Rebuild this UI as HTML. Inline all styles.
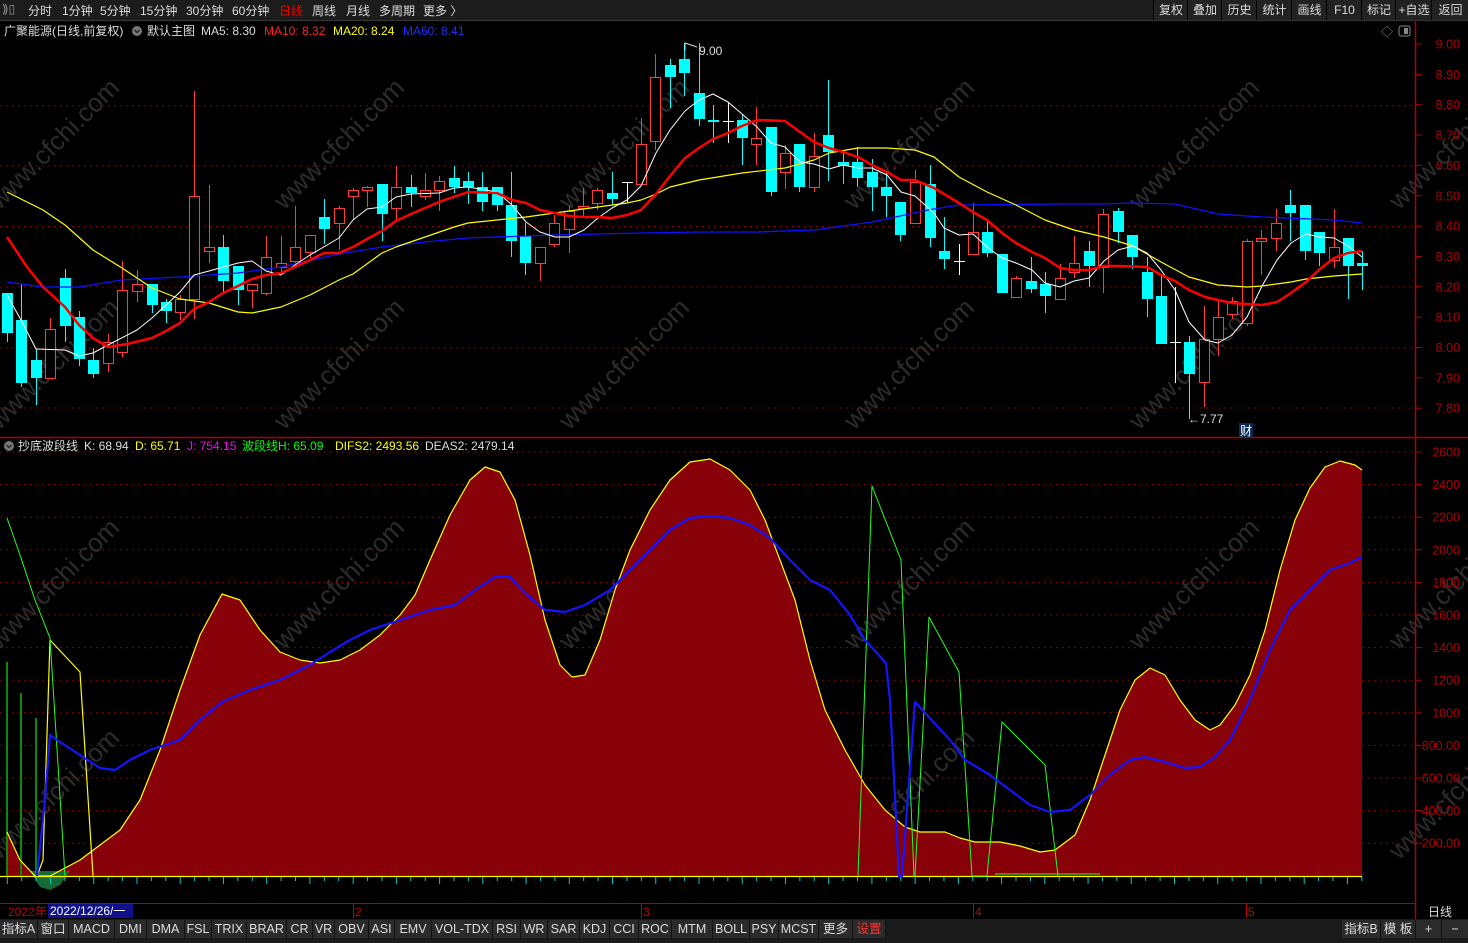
<!DOCTYPE html>
<html><head><meta charset="utf-8">
<style>
html,body{margin:0;padding:0;background:#000;width:1468px;height:943px;overflow:hidden;font-family:"Liberation Sans","Noto Sans CJK SC",sans-serif;}
#top{position:absolute;left:0;top:0;width:1468px;height:20px;background:#1c1c1c;border-bottom:1px solid #333;}
#top span{position:absolute;top:2px;font-size:12px;color:#ddd;white-space:nowrap}
.rb{position:absolute;top:0;height:20px;line-height:20px;font-size:12px;color:#ddd;text-align:center;border-left:1px solid #000;background:#222}
#bot{position:absolute;left:0;top:919px;width:1468px;height:24px;background:#1a1a1a;}
#bot div{position:absolute;top:1px;height:18px;line-height:18px;font-size:12.5px;color:#ddd;background:#2b2b2b;text-align:center;border-right:1px solid #111}
svg{position:absolute;left:0;top:0}
</style></head><body>
<svg id="s" width="1468" height="943" xmlns="http://www.w3.org/2000/svg"></svg>
<div id="top">
<span style="left:2px;color:#999">⟫▯</span>
<span style="left:28px">分时</span><span style="left:62px">1分钟</span><span style="left:100px">5分钟</span><span style="left:140px">15分钟</span><span style="left:186px">30分钟</span><span style="left:232px">60分钟</span><span style="left:279px;color:#e00">日线</span><span style="left:312px">周线</span><span style="left:346px">月线</span><span style="left:379px">多周期</span><span style="left:423px">更多 〉</span>
<div class="rb" style="left:1153px;width:34px">复权</div>
<div class="rb" style="left:1187px;width:34px">叠加</div>
<div class="rb" style="left:1221px;width:35px">历史</div>
<div class="rb" style="left:1256px;width:35px">统计</div>
<div class="rb" style="left:1291px;width:35px">画线</div>
<div class="rb" style="left:1326px;width:35px">F10</div>
<div class="rb" style="left:1361px;width:34px">标记</div>
<div class="rb" style="left:1395px;width:36px">+自选</div>
<div class="rb" style="left:1431px;width:37px">返回</div>
</div>
<div id="bot">
<div style="left:0;width:37px">指标A</div><div style="left:38px;width:30px">窗口</div><div style="left:69px;width:45px">MACD</div><div style="left:115px;width:31px">DMI</div><div style="left:147px;width:37px">DMA</div><div style="left:185px;width:26px">FSL</div><div style="left:212px;width:34px">TRIX</div><div style="left:247px;width:39px">BRAR</div><div style="left:287px;width:25px">CR</div><div style="left:313px;width:21px">VR</div><div style="left:335px;width:33px">OBV</div><div style="left:369px;width:25px">ASI</div><div style="left:395px;width:36px">EMV</div><div style="left:432px;width:60px">VOL-TDX</div><div style="left:493px;width:27px">RSI</div><div style="left:521px;width:26px">WR</div><div style="left:548px;width:31px">SAR</div><div style="left:580px;width:29px">KDJ</div><div style="left:610px;width:28px">CCI</div><div style="left:639px;width:32px">ROC</div><div style="left:672px;width:40px">MTM</div><div style="left:713px;width:36px">BOLL</div><div style="left:750px;width:28px">PSY</div><div style="left:779px;width:39px">MCST</div><div style="left:819px;width:33px">更多</div><div style="left:853px;width:32px;color:#f33">设置</div>
<div style="left:1342px;width:38px">指标B</div><div style="left:1381px;width:34px">模 板</div><div style="left:1416px;width:25px">+</div><div style="left:1442px;width:26px">−</div>
</div>
<script>
var s=document.getElementById('s'),h='';
function L(x1,y1,x2,y2,c,w,d){h+='<line x1="'+x1+'" y1="'+y1+'" x2="'+x2+'" y2="'+y2+'" stroke="'+c+'" stroke-width="'+(w||1)+'"'+(d?' stroke-dasharray="'+d+'"':'')+'/>';}
function T(x,y,t,c,sz,a){h+='<text x="'+x+'" y="'+y+'" fill="'+c+'" font-size="'+(sz||12)+'"'+(a?' text-anchor="'+a+'"':'')+' font-family="Liberation Sans,Noto Sans CJK SC,sans-serif">'+t+'</text>';}
function P(pts,c,w){h+='<polyline fill="none" stroke="'+c+'" stroke-width="'+w+'" stroke-linejoin="round" points="'+pts+'"/>';}
// watermarks
var wm=[[60,150],[345,150],[630,150],[915,150],[1200,150],[1460,150],[60,370],[345,370],[630,370],[915,370],[1200,370],[60,590],[345,590],[630,590],[915,590],[1200,590],[1460,590],[60,800],[345,800],[630,800],[915,800],[1200,800],[1460,800]];
wm.forEach(function(p){h+='<text x="'+p[0]+'" y="'+p[1]+'" fill="#2c2c2c" font-size="26" text-anchor="middle" transform="rotate(-45 '+p[0]+' '+p[1]+')" font-family="Liberation Sans,sans-serif">www.cfchi.com</text>';});
// grids main
[105.7,166,226.5,287,348,408].forEach(function(y){L(0,y,1415,y,'#8a0000',1,'2,4');});
for(var k=0;k<13;k++){var y=452+32.6*k;L(0,y,1415,y,'#8a0000',1,'2,4');}
// axis
L(1415.5,20,1415.5,919,'#b00000',1.5);
L(0,437.5,1468,437.5,'#b00000',1.5);
L(0,903.5,1415,903.5,'#b00000',1);
L(0,21,1468,21,'#300',1);
for(var i=0;i<13;i++){var p=(9-i*0.1).toFixed(2),y=44+i*30.35;L(1416,y,1422,y,'#b00000');T(1460,y+4.5,p,'#b00000',12.5,'end');}
for(var i=0;i<13;i++){var v=2600-200*i,y=452+32.6*i;L(1416,y,1422,y,'#b00000');T(1460,y+4.5,v==2600||v==2400||v==2200||v==2000||v==1800||v==1600||v==1400||v==1200||v==1000?v:(v+'.00').replace('.00.00','.00'),'#b00000',12.5,'end');}
// candles [x,open/top,close/bot,high,low,type]
var C=[[7,293,333,293,342,'c'],[21,320,383,284,387,'c'],[36,360,378,349,405,'c'],[50,329,378,318,378,'r'],[65,278,326,269,342,'c'],[79,317,359,311,366,'c'],[93,360,374,348,378,'c'],[108,342,363,334,372,'r'],[122,290,352,261,357,'r'],[137,284,291,270,302,'r'],[152,284,305,284,313,'c'],[166,302,311,299,323,'c'],[180,299,312,295,320,'r'],[194,196,299,91,319,'r'],[209,247,251,185,263,'r'],[223,247,281,235,292,'c'],[238,266,290,266,305,'c'],[252,284,290,284,308,'r'],[266,257,293,236,295,'r'],[281,263,267,236,273,'r'],[295,247,261,206,264,'r'],[310,235,252,235,258,'r'],[324,217,229,199,244,'c'],[339,208,223,206,250,'r'],[353,190,196,188,220,'r'],[367,187,190,186,207,'r'],[382,184,214,184,241,'c'],[396,187,208,166,222,'r'],[411,187,193,175,207,'c'],[425,190,196,173,200,'r'],[439,181,190,176,211,'r'],[454,178,187,166,193,'c'],[468,181,187,172,204,'c'],[482,187,202,172,211,'c'],[497,187,205,187,211,'c'],[511,205,241,172,257,'c'],[525,236,263,223,275,'c'],[540,247,263,247,281,'r'],[554,223,244,215,247,'r'],[569,211,229,206,253,'r'],[583,206,208,188,217,'r'],[597,190,203,188,210,'r'],[612,193,199,172,205,'c'],[627,182,182,182,202,'w'],[641,144,184,118,184,'r'],[655,77,141,54,150,'r'],[670,65,77,59,108,'c'],[684,59,73,43,96,'c'],[699,93,119,43,126,'c'],[713,120,122,105,143,'c'],[728,121,121,102,143,'w'],[742,120,138,114,165,'c'],[756,138,144,107,165,'r'],[771,127,192,127,196,'c'],[785,153,172,145,189,'r'],[799,144,187,144,192,'c'],[814,156,187,133,192,'r'],[828,135,152,80,181,'c'],[843,162,166,150,184,'c'],[857,162,178,147,187,'c'],[872,172,187,159,211,'c'],[886,187,196,173,217,'c'],[900,202,235,202,241,'c'],[915,182,223,170,223,'r'],[930,184,238,165,247,'c'],[944,251,259,217,269,'c'],[959,261,261,244,275,'w'],[973,232,254,203,254,'r'],[987,232,253,220,257,'c'],[1002,254,293,254,293,'c'],[1016,278,297,276,297,'r'],[1031,281,289,257,293,'c'],[1045,284,296,272,313,'c'],[1060,278,299,264,299,'r'],[1074,263,272,236,278,'r'],[1089,251,266,241,287,'c'],[1103,214,267,209,293,'r'],[1118,211,232,208,243,'c'],[1132,235,257,235,269,'c'],[1147,272,299,257,317,'c'],[1161,296,344,275,344,'c'],[1175,342,342,287,383,'w'],[1189,342,374,336,419,'c'],[1204,339,382,306,407,'r'],[1218,317,339,300,356,'r'],[1232,301,314,297,319,'r'],[1247,241,323,239,326,'r'],[1261,238,241,230,275,'r'],[1276,223,238,209,251,'r'],[1290,205,213,190,241,'c'],[1305,205,251,205,260,'c'],[1319,232,253,232,266,'c'],[1334,247,260,209,268,'r'],[1348,238,266,238,299,'c'],[1362,263,266,251,290,'c']];
C.forEach(function(c){var x=c[0],col=c[5]=='c'?'#00ffff':c[5]=='r'?'#ff3b3b':'#ffffff';
L(x+.5,c[3],x+.5,c[4],col,1);
if(c[5]=='c'){h+='<rect x="'+(x-5)+'" y="'+c[1]+'" width="11" height="'+Math.max(2,c[2]-c[1])+'" fill="#00ffff"/>';}
else if(c[5]=='r'){h+='<rect x="'+(x-4.5)+'" y="'+(c[1]+.5)+'" width="10" height="'+Math.max(2,c[2]-c[1])+'" fill="#000" stroke="#ff3b3b" stroke-width="1"/>';}
else{L(x-5,c[1]+.5,x+6,c[1]+.5,'#fff',1);}
});
// MAs
P('7,282 43,287 79,287 122,280 180,277 238,273 281,267 339,254 382,247 425,242 468,238 555,235 641,233 699,232 757,232 814,230 872,222 928,210 959,205 1060,204 1104,204 1133,203 1175,204 1218,214 1262,217 1334,220 1362,223','#1010ff',1.3);
P('7,192 43,210 65,225 93,250 122,268 152,288 180,299 209,303 238,312 252,313 281,307 310,295 339,280 353,274 382,253 396,247 425,237 454,227 468,223 526,217 569,211 627,203 641,200 656,194 670,187 699,180 742,173 785,168 814,160 829,153 858,148 887,148 915,150 934,157 959,177 987,192 1016,205 1045,220 1074,230 1104,237 1133,246 1161,262 1189,277 1218,285 1247,287 1262,286 1291,282 1306,279 1334,276 1362,274','#ffff00',1.2);
P('7,295 21,320 36,349 65,350 79,356 93,353 108,345 137,330 152,318 180,292 194,275 209,271 238,263 252,261 266,271 281,275 295,265 310,255 339,238 353,220 367,209 382,207 396,197 411,194 439,193 454,188 468,187 497,192 512,205 526,222 540,232 555,237 569,237 584,230 598,218 612,208 627,200 641,186 656,153 670,130 685,111 699,100 713,94 728,102 742,114 757,127 771,143 785,147 800,162 814,164 829,169 843,165 858,168 872,168 887,175 901,192 915,196 934,213 944,228 959,235 973,234 987,247 1002,258 1016,263 1032,270 1045,283 1060,287 1074,281 1089,278 1104,261 1118,250 1133,246 1147,253 1161,270 1175,290 1189,322 1205,340 1218,343 1232,335 1247,317 1262,286 1277,260 1291,243 1306,234 1320,237 1334,238 1348,246 1362,257','#ffffff',1);
P('7,237 27,267 43,287 65,307 79,325 93,338 108,347 127,344 152,338 166,331 180,323 194,309 209,302 223,293 238,286 252,279 266,275 281,273 295,267 310,260 324,253 339,253 353,247 367,239 382,231 396,221 411,214 425,208 439,202 468,192 497,193 512,200 526,203 540,210 555,213 569,216 584,217 598,217 612,218 627,215 641,210 656,194 670,176 685,158 699,148 713,139 728,133 742,126 757,120 785,121 800,132 814,142 829,148 843,152 858,157 872,165 887,172 901,180 915,180 934,188 959,203 973,212 987,220 1002,233 1016,243 1032,252 1045,258 1060,268 1074,270 1089,270 1104,266 1118,266 1147,267 1161,275 1175,281 1189,290 1205,297 1218,300 1232,303 1262,305 1277,302 1291,293 1306,282 1320,269 1334,258 1348,253 1362,251','#ff0000',2.5);
// annotations
P('685,50 685,43 697,47','#ddd',1);T(699,55,'9.00','#ddd',12);
T(1188,423,'←7.77','#ddd',12);
h+='<rect x="1239" y="423" width="14" height="14" fill="#0a2a5a"/>';T(1240,435,'财','#fff',12);
T(1381,36,'◇','#888',12);h+='<rect x="1399" y="26" width="11" height="10" rx="2" fill="none" stroke="#888"/><rect x="1404" y="28" width="4" height="6" fill="#888"/>';
// header texts
h+='<text y="35" font-size="12" font-family="Liberation Sans,Noto Sans CJK SC,sans-serif"><tspan x="4" fill="#ddd">广聚能源(日线,前复权)</tspan><tspan x="147" fill="#ddd">默认主图</tspan><tspan x="201" fill="#ddd">MA5: 8.30</tspan><tspan x="264" fill="#ff2020">MA10: 8.32</tspan><tspan x="333" fill="#ffff00">MA20: 8.24</tspan><tspan x="403" fill="#2030ff">MA60: 8.41</tspan></text>';
h+='<circle cx="137" cy="31" r="5" fill="#777"/><path d="M134.5 30 L137 32.5 L139.5 30" stroke="#222" fill="none" stroke-width="1.3"/>';
h+='<circle cx="9" cy="446" r="5" fill="#777"/><path d="M6.5 445 L9 447.5 L11.5 445" stroke="#222" fill="none" stroke-width="1.3"/>';
h+='<text y="450" font-size="12" font-family="Liberation Sans,Noto Sans CJK SC,sans-serif"><tspan x="18" fill="#ddd">抄底波段线</tspan><tspan x="84" fill="#ddd">K: 68.94</tspan><tspan x="135" fill="#ffff00">D: 65.71</tspan><tspan x="187" fill="#ff00ff">J: 754.15</tspan><tspan x="242" fill="#00ff00">波段线H: 65.09</tspan><tspan x="335" fill="#ffff00">DIFS2: 2493.56</tspan><tspan x="425" fill="#ddd">DEAS2: 2479.14</tspan></text>';
// lower panel
var Y='7,832 20,860 35,876 50,876 80,860 100,845 120,830 140,800 160,750 180,690 200,635 222,594 240,600 260,630 280,652 300,660 320,663 340,660 360,650 380,635 400,615 415,595 430,560 450,515 470,480 485,467 500,472 515,500 530,555 545,620 560,665 572,677 585,675 600,640 615,590 630,550 650,510 670,480 690,462 710,459 730,470 750,490 765,520 780,560 795,600 810,660 825,710 845,750 865,785 885,810 905,827 920,832 945,832 960,838 975,842 1000,842 1020,846 1040,852 1055,850 1075,835 1090,800 1105,755 1120,710 1135,680 1150,668 1165,675 1180,700 1195,720 1210,730 1220,725 1235,705 1250,675 1265,630 1280,570 1295,520 1310,488 1325,467 1340,461 1355,465 1362,470';
h+='<polygon points="7,876 '+Y+' 1362,876" fill="#880008"/>';
h+='<polygon points="30,871 70,871 60,885 50,890 40,887" fill="#156b35"/>';
L(0,876.5,1362,876.5,'#ffff00',1.2);
for(var i=0;i<95;i++){var x=7.3+14.41*i;L(x,877,x,i%3?881:884,'#00cccc',1);}
L(7,662,7,876,'#0a8a0a',2);L(21,693,21,876,'#0a8a0a',2);L(36,718,36,876,'#0a8a0a',2);
P(Y,'#ffff00',1.2);
P('50,640 80,672 93,876','#ffff00',1.2);P('50,640 43,860 37,876','#ffff00',1.2);
P('7,518 20,555 35,600 50,638 65,876','#22ff22',1);
P('858,876 872,486 901,560 914,876 915,876 929,617 959,672 972,876 987,876 1002,722 1045,765 1058,876','#22ff22',1);
L(995,874,1100,874,'#22ff22',1);
P('37,876 45,800 50,735 57,740 80,755 100,768 115,770 130,760 150,750 180,740 200,720 222,702 250,690 280,680 310,665 330,652 350,640 370,630 400,620 430,610 455,605 475,590 495,577 510,577 525,593 545,610 565,612 585,605 610,590 630,570 650,550 670,530 690,518 710,516 730,518 750,525 770,538 790,560 810,580 830,590 850,615 865,640 886,663 890,700 899,876 902,876 915,702 950,740 965,760 990,775 1010,790 1030,805 1050,812 1070,810 1090,795 1110,775 1130,760 1145,757 1165,762 1185,768 1200,767 1215,757 1230,740 1250,700 1270,650 1290,610 1310,590 1330,570 1350,563 1362,557','#1414ff',2.2);
// date axis
T(8,916,'2022年','#c00000',12);
h+='<rect x="48" y="904" width="85" height="14" fill="#10108a"/>';T(50,915,'2022/12/26/一','#fff',12);
[[353,'2'],[641,'3'],[973,'4'],[1246,'5']].forEach(function(m){L(m[0]+.5,904,m[0]+.5,918,'#c00000',1);T(m[0]+2,916,m[1],'#c00000',12);});
T(1428,916,'日线','#ddd',12);
s.innerHTML=h;
</script>
</body></html>
